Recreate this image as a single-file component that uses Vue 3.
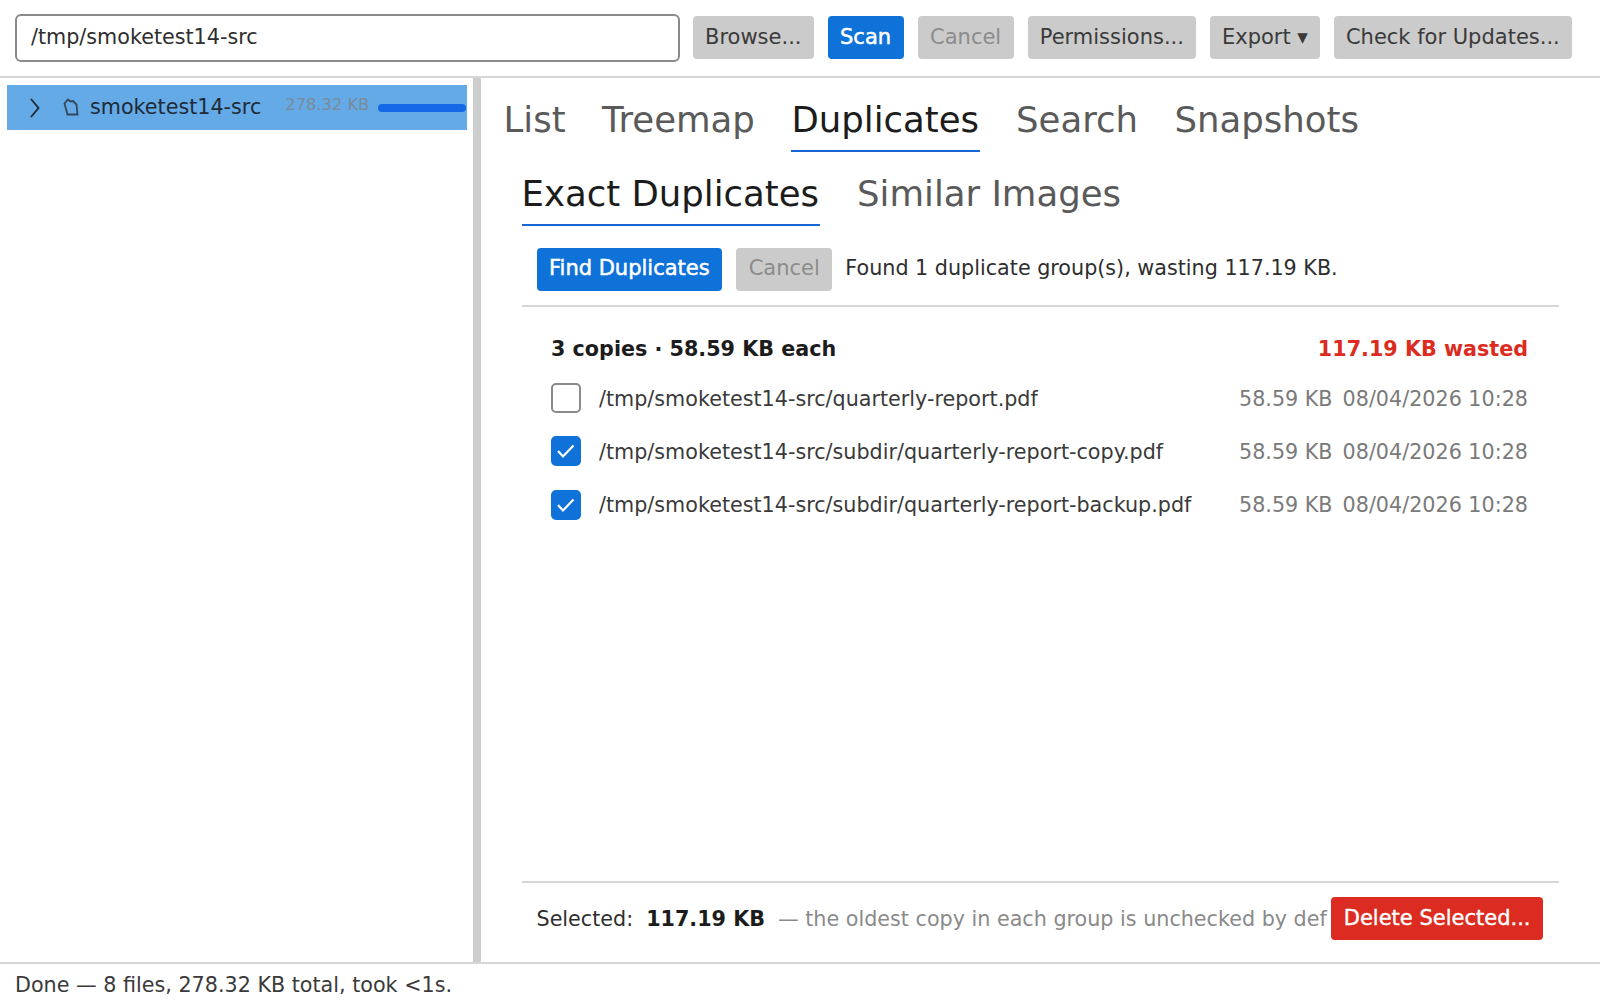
<template>
  <div class="app">
    <header class="toolbar">
      <div class="path">/tmp/smoketest14-src</div>
      <button class="btn">Browse...</button>
      <button class="btn primary">Scan</button>
      <button class="btn disabled">Cancel</button>
      <button class="btn">Permissions...</button>
      <button class="btn">Export ▾</button>
      <button class="btn">Check for Updates...</button>
    </header>
    <main class="body">
      <aside class="side">
        <div class="tree-row">
          <svg class="chev" width="12" height="20" viewBox="0 0 12 20"><path d="M2 1l7.5 9L2 19" fill="none" stroke="#1c2733" stroke-width="1.8"/></svg>
          <svg class="file" width="16" height="18" viewBox="0 0 16 18"><path d="M1.5 5.5L5 1.5l2.5 2 2.5-.5 3.5 3.5 1 10H4.5z" fill="none" stroke="#33475b" stroke-width="1.8"/></svg>
          <span class="name">smoketest14-src</span>
          <span class="size">278.32 KB</span>
          <span class="bar"></span>
        </div>
      </aside>
      <div class="splitter"></div>
      <section class="content">
        <nav class="tabs top">
          <span v-for="t in tabs" :key="t" class="tab" :class="{ on: t === 'Duplicates' }">{{ t }}</span>
        </nav>
        <div class="panel">
          <nav class="tabs sub">
            <span class="tab on">Exact Duplicates</span>
            <span class="tab">Similar Images</span>
          </nav>
          <div class="actions">
            <button class="btn primary">Find Duplicates</button>
            <button class="btn disabled">Cancel</button>
            <span class="found">Found 1 duplicate group(s), wasting 117.19 KB.</span>
          </div>
          <div class="groups">
            <div class="group-head">
              <b>3 copies · 58.59 KB each</b>
              <b class="wasted">117.19 KB wasted</b>
            </div>
            <div v-for="r in rows" :key="r.path" class="row">
              <span class="check" :class="{ checked: r.checked }">
                <svg v-if="r.checked" width="26" height="26" viewBox="0 0 26 26"><path d="M5 13l5 5.5L20.5 7.5" fill="none" stroke="#fff" stroke-width="2.2"/></svg>
              </span>
              <span class="file-path">{{ r.path }}</span>
              <span class="meta">58.59 KB</span>
              <span class="meta">08/04/2026 10:28</span>
            </div>
          </div>
          <footer class="foot">
            <span class="sel">Selected:</span>
            <b class="total">117.19 KB</b>
            <span class="hint">— the oldest copy in each group is unchecked by default</span>
            <button class="btn danger">Delete Selected...</button>
          </footer>
        </div>
      </section>
    </main>
    <div class="status">Done — 8 files, 278.32 KB total, took &lt;1s.</div>
  </div>
</template>

<script setup>
const tabs = ['List', 'Treemap', 'Duplicates', 'Search', 'Snapshots']
const rows = [
  { path: '/tmp/smoketest14-src/quarterly-report.pdf', checked: false },
  { path: '/tmp/smoketest14-src/subdir/quarterly-report-copy.pdf', checked: true },
  { path: '/tmp/smoketest14-src/subdir/quarterly-report-backup.pdf', checked: true }
]
</script>

<style>
html, body { margin: 0; background: #fff; }
</style>

<style scoped>
.app { width: 1600px; height: 1007px; display: flex; flex-direction: column; font-family: "DejaVu Sans", sans-serif; font-size: 20.7px; color: #2e2e2e; background: #fff; overflow: hidden; }
.toolbar { height: 78px; box-sizing: border-box; border-bottom: 2px solid #d6d6d6; padding: 14px 15px 0; display: flex; gap: 14px; align-items: flex-start; flex: none; }
.path { width: 665px; height: 48px; box-sizing: border-box; border: 2px solid #8a8a8a; border-radius: 6px; padding: 0 14px; line-height: 43px; margin-right: -1px; flex: none; }
.btn { height: 43px; box-sizing: border-box; margin-top: 2px; border: 0; border-radius: 4px; padding: 0 12px 2px; font-family: inherit; font-size: 21px; color: #3a3a3a; background: #cbcbcb; white-space: nowrap; flex: none; }
.primary { background: #0f72d8; color: #fff; -webkit-text-stroke: 0.5px #fff; padding: 0 12.5px 2px; }
.disabled { color: #8c8c8c; }
.btn.disabled { padding: 0 12.5px 2px; }
.danger { background: #dc2b20; color: #fff; margin: 0; -webkit-text-stroke: 0.4px #fff; padding: 0 12.5px 2px; }
.body { flex: 1; display: flex; min-height: 0; }
.side { width: 473px; box-sizing: border-box; padding: 7px 6px 0 7px; flex: none; }
.tree-row { height: 45px; background: #64aae6; display: flex; align-items: center; padding-left: 22px; }
.file { margin-left: 22px; margin-top: -1px; }
.name { margin-left: 11px; margin-top: -2px; color: #1f2a36; }
.size { margin-left: 24px; font-size: 16.3px; color: #7b8a99; margin-top: -7px; }
.bar { margin-left: 9px; flex: 1; height: 8px; border-radius: 4px; background: #1469e6; margin-right: 1px; }
.splitter { width: 8px; background: #cdcdcd; flex: none; }
.content { flex: 1; min-width: 0; padding-left: 22.5px; padding-right: 41px; display: flex; flex-direction: column; }
.tabs { display: flex; gap: 36.5px; }
.tab { color: #5a5a5a; border-bottom: 2px solid transparent; }
.tab.on { color: #1c1c1c; border-bottom-color: #1566d6; }
.top { margin-top: 17px; }
.tabs .tab { font-size: 35.5px; height: 55px; line-height: 50px; }
.tabs .tab.on { padding-right: 0.5px; }
.panel { flex: 1; margin-left: 18px; display: flex; flex-direction: column; min-height: 0; }
.sub { margin-top: 17px; gap: 37.5px; }
.actions { height: 81px; box-sizing: border-box; border-bottom: 2px solid #d6d6d6; display: flex; align-items: flex-start; padding: 20px 0 0 15px; gap: 14px; }
.actions .btn { margin: 2px 0 0; padding-bottom: 4px; }
.found { line-height: 45px; margin-left: -1px; }
.groups { flex: 1; padding: 0 31px 0 29.5px; }
.group-head { display: flex; justify-content: space-between; padding-top: 30px; height: 65px; box-sizing: border-box; color: #1c1c1c; }
.wasted { color: #dc2b20; }
.row { display: flex; align-items: center; height: 53.25px; }
.check { width: 30px; height: 30px; box-sizing: border-box; border: 2px solid #8a8a8a; border-radius: 5px; display: flex; align-items: center; justify-content: center; flex: none; margin-top: -1px; }
.checked { background: #0f72d8; border-color: #0f72d8; }
.file-path { margin-left: 18px; flex: 1; color: #3a3a3a; }
.meta { color: #7a7a7a; margin-left: 10px; }
.foot { height: 81px; box-sizing: border-box; border-top: 2px solid #d6d6d6; display: flex; align-items: center; padding: 14px 16px 22px 15px; white-space: nowrap; }
.total { margin-left: 13px; color: #1c1c1c; }
.hint { margin-left: 13px; margin-right: 3px; color: #8a8a8a; flex: 1; min-width: 0; overflow: hidden; }
.status { height: 45px; box-sizing: border-box; border-top: 2px solid #d6d6d6; padding-left: 15px; line-height: 42px; color: #3a3a3a; flex: none; }
</style>
